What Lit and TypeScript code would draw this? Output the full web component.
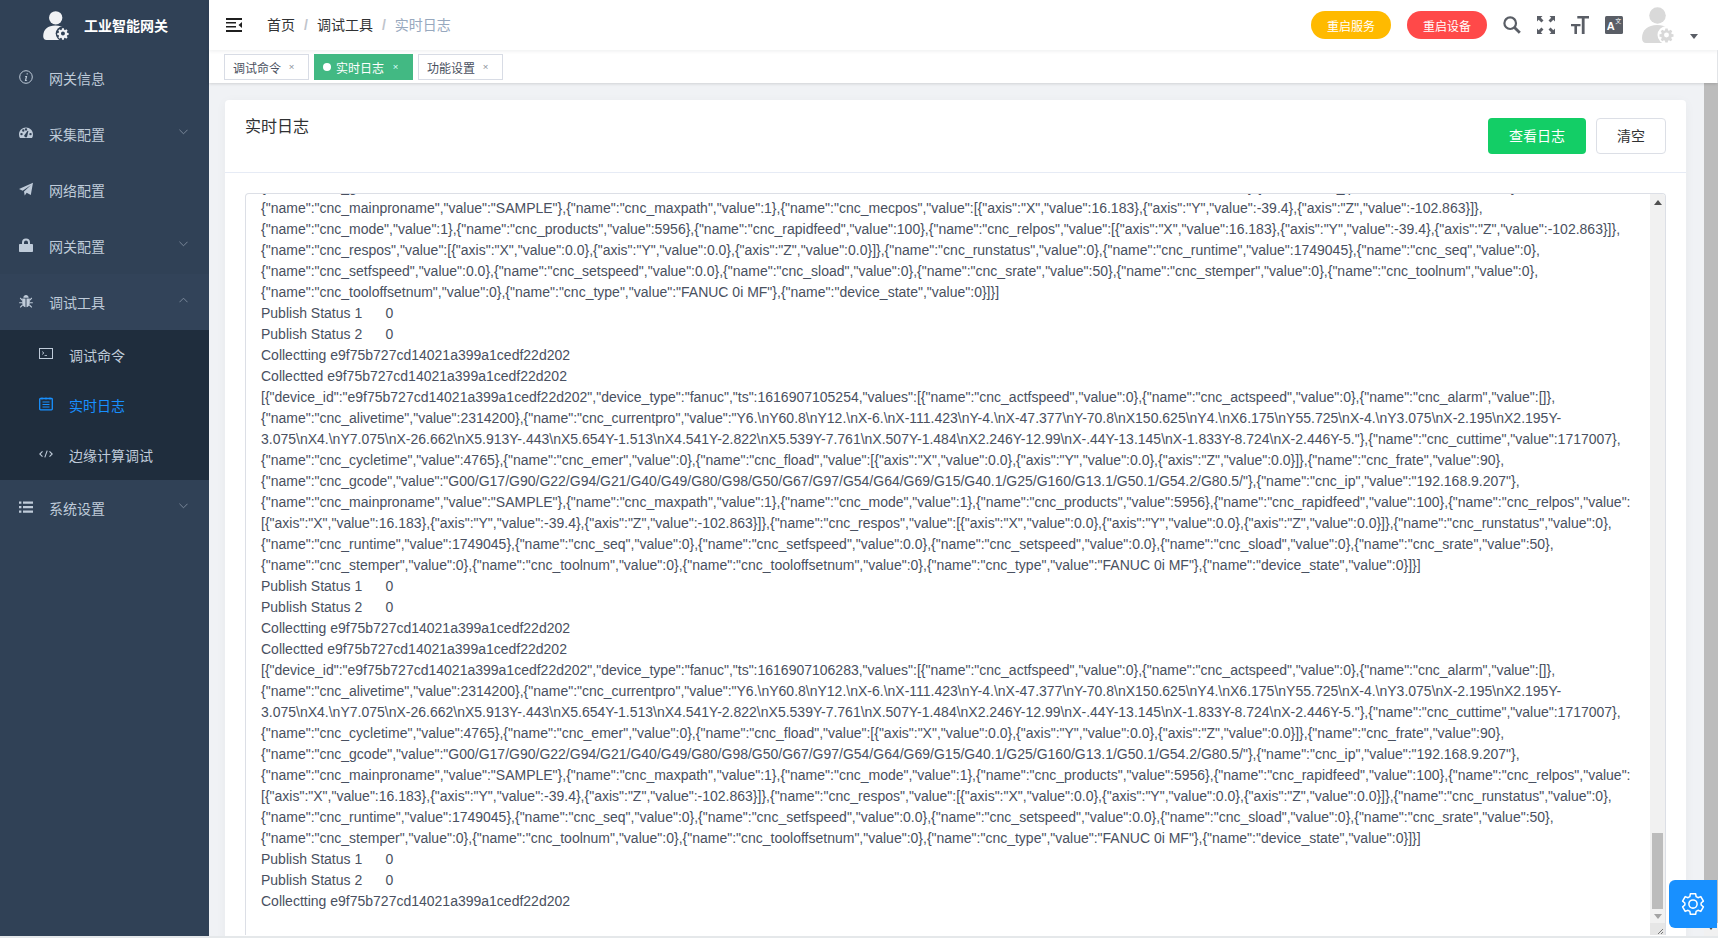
import { LitElement, html, css, svg } from "lit";
import { customElement } from "lit/decorators.js";

const ID = "e9f75b727cd14021a399a1cedf22d202";
const GCODE = `{"name":"cnc_gcode","value":"G00/G17/G90/G22/G94/G21/G40/G49/G80/G98/G50/G67/G97/G54/G64/G69/G15/G40.1/G25/G160/G13.1/G50.1/G54.2/G80.5/"},{"name":"cnc_ip","value":"192.168.9.207"},`;
const block = (ts: string) => [
  `Publish Status 1\t0`,
  `Publish Status 2\t0`,
  `Collectting ${ID}`,
  `Collectted ${ID}`,
  `[{"device_id":"${ID}","device_type":"fanuc","ts":${ts},"values":[{"name":"cnc_actfspeed","value":0},{"name":"cnc_actspeed","value":0},{"name":"cnc_alarm","value":[]},`,
  `{"name":"cnc_alivetime","value":2314200},{"name":"cnc_currentpro","value":"Y6.\\nY60.8\\nY12.\\nX-6.\\nX-111.423\\nY-4.\\nX-47.377\\nY-70.8\\nX150.625\\nY4.\\nX6.175\\nY55.725\\nX-4.\\nY3.075\\nX-2.195\\nX2.195Y-`,
  `3.075\\nX4.\\nY7.075\\nX-26.662\\nX5.913Y-.443\\nX5.654Y-1.513\\nX4.541Y-2.822\\nX5.539Y-7.761\\nX.507Y-1.484\\nX2.246Y-12.99\\nX-.44Y-13.145\\nX-1.833Y-8.724\\nX-2.446Y-5."},{"name":"cnc_cuttime","value":1717007},`,
  `{"name":"cnc_cycletime","value":4765},{"name":"cnc_emer","value":0},{"name":"cnc_fload","value":[{"axis":"X","value":0.0},{"axis":"Y","value":0.0},{"axis":"Z","value":0.0}]},{"name":"cnc_frate","value":90},`,
  GCODE,
  `{"name":"cnc_mainproname","value":"SAMPLE"},{"name":"cnc_maxpath","value":1},{"name":"cnc_mode","value":1},{"name":"cnc_products","value":5956},{"name":"cnc_rapidfeed","value":100},{"name":"cnc_relpos","value":`,
  `[{"axis":"X","value":16.183},{"axis":"Y","value":-39.4},{"axis":"Z","value":-102.863}]},{"name":"cnc_respos","value":[{"axis":"X","value":0.0},{"axis":"Y","value":0.0},{"axis":"Z","value":0.0}]},{"name":"cnc_runstatus","value":0},`,
  `{"name":"cnc_runtime","value":1749045},{"name":"cnc_seq","value":0},{"name":"cnc_setfspeed","value":0.0},{"name":"cnc_setspeed","value":0.0},{"name":"cnc_sload","value":0},{"name":"cnc_srate","value":50},`,
  `{"name":"cnc_stemper","value":0},{"name":"cnc_toolnum","value":0},{"name":"cnc_tooloffsetnum","value":0},{"name":"cnc_type","value":"FANUC 0i MF"},{"name":"device_state","value":0}]}]`,
];
const LINES = [
  GCODE,
  `{"name":"cnc_mainproname","value":"SAMPLE"},{"name":"cnc_maxpath","value":1},{"name":"cnc_mecpos","value":[{"axis":"X","value":16.183},{"axis":"Y","value":-39.4},{"axis":"Z","value":-102.863}]},`,
  `{"name":"cnc_mode","value":1},{"name":"cnc_products","value":5956},{"name":"cnc_rapidfeed","value":100},{"name":"cnc_relpos","value":[{"axis":"X","value":16.183},{"axis":"Y","value":-39.4},{"axis":"Z","value":-102.863}]},`,
  `{"name":"cnc_respos","value":[{"axis":"X","value":0.0},{"axis":"Y","value":0.0},{"axis":"Z","value":0.0}]},{"name":"cnc_runstatus","value":0},{"name":"cnc_runtime","value":1749045},{"name":"cnc_seq","value":0},`,
  `{"name":"cnc_setfspeed","value":0.0},{"name":"cnc_setspeed","value":0.0},{"name":"cnc_sload","value":0},{"name":"cnc_srate","value":50},{"name":"cnc_stemper","value":0},{"name":"cnc_toolnum","value":0},`,
  `{"name":"cnc_tooloffsetnum","value":0},{"name":"cnc_type","value":"FANUC 0i MF"},{"name":"device_state","value":0}]}]`,
  ...block("1616907105254"),
  ...block("1616907106283"),
  `Publish Status 1\t0`,
  `Publish Status 2\t0`,
  `Collectting ${ID}`,
];

const gearPath = "M12 8.2a3.8 3.8 0 1 0 0 7.6 3.8 3.8 0 0 0 0-7.6zM10.2 2h3.6l.6 2.9 1.5.6 2.5-1.6 2.5 2.5-1.6 2.5.6 1.5 2.9.6v3.6l-2.9.6-.6 1.5 1.6 2.5-2.5 2.5-2.5-1.6-1.5.6-.6 2.9h-3.6l-.6-2.9-1.5-.6-2.5 1.6-2.5-2.5 1.6-2.5-.6-1.5-2.9-.6v-3.6l2.9-.6.6-1.5-1.6-2.5 2.5-2.5 2.5 1.6 1.5-.6z";

const userGear = (body: string, gearFill: string, halo: string) => html`<svg viewBox="0 0 33 36" width="100%" height="100%">
  <circle cx="15.500" cy="8.500" r="8.300" fill="${body}"></circle>
  <path d="M0 31c0-8 6-13 15-13 5 0 9 1.500 12 4v14H4c-2.500 0-4-1.500-4-5z" fill="${body}"></path>
  <circle cx="24.500" cy="28" r="9" fill="${halo}"></circle>
  <g transform="translate(16.700 20.200) scale(.65)"><path d="${gearPath}" fill="${gearFill}" fill-rule="evenodd"></path></g>
</svg>`;

const ICONS: Record<string, unknown> = {
  info: svg`<circle cx="7" cy="7" r="6.300" fill="none" stroke="currentColor" stroke-width="1"></circle><path d="M7.600 3.200h1.200v1.200H7.600zM6 6h2.200l-1 4.200h.9v.7H5.800l1-4.200H6z" fill="currentColor"></path>`,
  gauge: svg`<path fill-rule="evenodd" d="M7 1.500C3.100 1.500 0 4.600 0 8.500c0 1.300.4 2.600 1 3.600h12c.6-1 1-2.300 1-3.600 0-3.900-3.100-7-7-7zM2.500 9.300a1.200 1.200 0 1 1 0-2.400 1.200 1.200 0 0 1 0 2.400zM4.300 5.700a1.200 1.200 0 1 1 0-2.400 1.200 1.200 0 0 1 0 2.400zM7 4.600a1.200 1.200 0 1 1 0-2.400 1.200 1.200 0 0 1 0 2.400zM8.200 10.300a1.500 1.500 0 1 1-2.300-1.700l2.700-3.900.8.400zM11.500 9.300a1.200 1.200 0 1 1 0-2.400 1.200 1.200 0 0 1 0 2.400z" fill="currentColor"></path>`,
  plane: svg`<path d="M14 .8 11.800 13 7.700 10.800 5.700 13.400 5 9.500 12 3 3.700 8.700 0 7.100z" fill="currentColor"></path>`,
  lock: svg`<path fill-rule="evenodd" d="M3 6V4.500a4 4 0 0 1 8 0V6h2.200c.5 0 .8.300.8.800v6.400c0 .5-.3.800-.8.800H.8c-.5 0-.8-.3-.8-.8V6.800C0 6.300.3 6 .8 6zm2 0h4V4.500a2 2 0 0 0-4 0z" fill="currentColor"></path>`,
  bug: svg`<path d="M4.300 3.700C4.500 2 5.600 1 7 1s2.500 1 2.700 2.700zM3.200 4.600h3.300V13.200C4.500 13 3.200 11.200 3.200 9zM7.500 4.600h3.300V9c0 2.200-1.300 4-3.300 4.200z" fill="currentColor"></path><path d="M3.400 6.300 1.200 4M3.200 8.700H.2M3.600 11 1.200 13.400M10.600 6.300 12.800 4M10.800 8.700h3M10.400 11l2.400 2.400" fill="none" stroke="currentColor" stroke-width="1.100"></path>`,
  list: svg`<path d="M0 1.500h2.400v2.200H0zM4 1.500h10v2.200H4zM0 6h2.400v2.200H0zM4 6h10v2.200H4zM0 10.500h2.400v2.200H0zM4 10.500h10v2.200H4z" fill="currentColor"></path>`,
  term: svg`<rect x=".5" y="1.500" width="13" height="10" fill="none" stroke="currentColor" stroke-width="1"></rect><path d="M3 4.500 5 6 3 7.500M5.500 8.500h2.500" fill="none" stroke="currentColor" stroke-width=".8"></path>`,
  log: svg`<path d="M3 .5v2M7 .5v2M11 .5v2" stroke="currentColor" stroke-width="1" fill="none"></path><rect x=".7" y="1.500" width="12.600" height="11.300" rx=".8" fill="none" stroke="currentColor" stroke-width="1.300"></rect><path d="M3.500 5h7M3.500 7.500h7M3.500 10h7" stroke="currentColor" stroke-width="1" fill="none"></path>`,
  code: svg`<path d="M3.500 4.300.8 7l2.700 2.700M10.500 4.300 13.200 7l-2.700 2.700M8.200 3.600 5.800 10.400" fill="none" stroke="currentColor" stroke-width="1.100"></path>`,
};
const icon = (n: string) => html`<svg class="mi" viewBox="0 0 14 14" width="14" height="14">${ICONS[n]}</svg>`;
const chevron = (up = false) => html`<svg class="chev" viewBox="0 0 10 6" width="9" height="6"><path d="${up ? "M.5 5.500 5 1l4.500 4.500" : "M.5.500 5 5 9.500.500"}" fill="none" stroke="currentColor" stroke-width=".9"></path></svg>`;

@customElement("app-root")
export class AppRoot extends LitElement {
  static styles = css`
    :host { display: block; width: 1718px; height: 938px; overflow: hidden; position: relative; background: #f0f2f5;
      font-family: "Liberation Sans", "Noto Sans CJK SC", sans-serif; color: #303133; }
    .app { display: flex; height: 938px; }
    .side { width: 209px; flex: none; background: #304156; color: #bfcbd9; font-size: 14px; }
    .logo { height: 50px; display: flex; align-items: center; padding-left: 43px; box-sizing: border-box; color: #fff; font-weight: 700; }
    .logo .lg { width: 27px; height: 29px; margin-right: 14px; }
    .logo span { margin-top: -1px; }
    .item { height: 56px; display: flex; align-items: center; padding-left: 19px; box-sizing: border-box; }
    .item .mi { margin-right: 16px; flex: none; margin-top: -2px; }
    .item .chev { margin-left: auto; margin-right: 21px; margin-top: -5px; color: #8a97a8; }
    .item.open { background: #324359; }
    .sub { background: #1f2d3d; }
    .sub .item { height: 50px; padding-left: 39px; }
    .sub .item.on { color: #1890ff; }
    .main { flex: 1; display: flex; flex-direction: column; min-width: 0; }
    .top { height: 50px; flex: none; background: #fff; display: flex; align-items: center; box-shadow: 0 1px 4px rgba(0,21,41,.08); position: relative; z-index: 2; font-size: 14px; }
    .ham { margin-left: 17px; width: 16px; height: 14px; flex: none; }
    .crumb { margin-left: 25px; margin-top: -2px; display: flex; align-items: baseline; color: #303133; white-space: nowrap; }
    .crumb i { font-style: normal; font-weight: 700; color: #c0c4cc; margin: 0 9px; }
    .crumb .last { color: #97a8be; }
    .right { margin-left: auto; display: flex; align-items: center; height: 50px; }
    .pill { width: 80px; height: 28px; border-radius: 14px; color: #fff; font-size: 12px; display: flex; align-items: center; justify-content: center; margin-right: 16px; }
    .pill.y { background: #ffba00; }
    .pill.r { background: #ff4949; }
    .ti { width: 18px; height: 18px; margin-right: 16px; flex: none; color: #5a5e66; margin-top: -1px; }
    .ava { width: 33px; height: 36px; margin-left: 3px; }
    .caret { width: 0; height: 0; border: 4px solid transparent; border-top: 5px solid #5a5e66; border-bottom: 0; margin: 22px 20px 0 15px; }
    .tags { height: 33px; flex: none; background: #fff; box-sizing: border-box; padding: 4px 0 0 15px; display: flex; gap: 5px; box-shadow: 0 1px 3px 0 rgba(0,0,0,.12), 0 0 3px 0 rgba(0,0,0,.04); position: relative; z-index: 1; margin-right: 1px; }
    .tag { height: 26px; box-sizing: border-box; border: 1px solid #d8dce5; background: #fff; color: #495060; font-size: 12px; display: flex; align-items: center; padding-left: 8px; }
    .tag em { font-style: normal; font-size: 12px; color: #8b8f98; margin-left: 7px; transform: scale(.8); }
    .tag.on { background: #42b983; border-color: #42b983; color: #fff; padding-left: 8px; }
    .tag.on em { color: #dff; margin-left: 8px; }
    .tag .dot { width: 8px; height: 8px; border-radius: 50%; background: #fff; margin-right: 5px; }
    .wrap { flex: 1; display: flex; min-height: 0; position: relative; }
    .content { flex: 1; padding: 17px 18px 0 16px; min-width: 0; }
    .pagebar { width: 14px; flex: none; background: #f1f1f1; display: flex; flex-direction: column; align-items: center; }
    .pagethumb { flex: 1; width: 14px; background: #bcbcbc; }
    .pagedown { width: 0; height: 0; border: 3px solid transparent; border-top: 4px solid #505050; border-bottom: 0; margin: 3px 0 8px; }
    .card { background: #fff; border-radius: 4px 4px 0 0; box-shadow: 0 2px 12px 0 rgba(0,0,0,.04); height: 853px; overflow: hidden; }
    .chead { height: 73px; box-sizing: border-box; border-bottom: 1px solid #e6ebf5; display: flex; padding: 18px 20px 0; }
    .chead h2 { margin: 0; font-weight: 400; font-size: 16px; line-height: 18px; color: #303133; }
    .btns { margin-left: auto; display: flex; gap: 10px; }
    .btn { height: 36px; box-sizing: border-box; border-radius: 4px; font-size: 14px; display: flex; align-items: center; justify-content: center; padding-bottom: 2px; }
    .btn.g { width: 98px; background: #13ce66; color: #fff; }
    .btn.w { width: 70px; border: 1px solid #dcdfe6; color: #303133; }
    .cbody { padding: 20px 20px 0; }
    .ta { height: 742px; box-sizing: border-box; border: 1px solid #dcdfe6; border-bottom: 0; border-radius: 4px 4px 0 0; display: flex; overflow: hidden; background: #fff; }
    .log { flex: 1; min-width: 0; overflow: hidden; padding-left: 15px; font-size: 14px; line-height: 21px; color: #495060; }
    .log > div { height: 21px; white-space: pre; tab-size: 8; }
    .log > div:first-child { margin-top: -17px; }
    .sb { width: 15px; flex: none; background: #f1f1f1; display: flex; flex-direction: column; align-items: center; }
    .up { width: 0; height: 0; border: 4px solid transparent; border-bottom: 5px solid #505050; border-top: 0; margin-top: 6px; }
    .gap1 { height: 628px; flex: none; }
    .thumb { width: 11px; height: 76px; background: #bcbcbc; flex: none; }
    .down { width: 0; height: 0; border: 4px solid transparent; border-top: 5px solid #a3a3a3; border-bottom: 0; margin-top: 5px; }
    .grip { margin-top: auto; width: 15px; height: 12px; background: #e6e6e6; display: block; }
    .gear { position: absolute; right: 1px; top: 880px; width: 48px; height: 48px; background: #1890ff; border-radius: 6px 0 0 6px; display: flex; align-items: center; justify-content: center; z-index: 5; }
    .foot { position: absolute; left: 0; right: 0; bottom: 0; height: 2px; background: #e5e8ea; z-index: 4; }
  `;

  render() {
    return html`<div class="app">
      <aside class="side">
        <div class="logo"><div class="lg">${userGear("#f0f2f5", "#f0f2f5", "#304156")}</div><span>工业智能网关</span></div>
        <div class="item">${icon("info")}网关信息</div>
        <div class="item">${icon("gauge")}采集配置${chevron()}</div>
        <div class="item">${icon("plane")}网络配置</div>
        <div class="item">${icon("lock")}网关配置${chevron()}</div>
        <div class="item open">${icon("bug")}调试工具${chevron(true)}</div>
        <div class="sub">
          <div class="item">${icon("term")}调试命令</div>
          <div class="item on">${icon("log")}实时日志</div>
          <div class="item">${icon("code")}边缘计算调试</div>
        </div>
        <div class="item">${icon("list")}系统设置${chevron()}</div>
      </aside>
      <div class="main">
        <header class="top">
          <svg class="ham" viewBox="0 0 16 14"><path d="M0 0h16v2H0zM0 12h16v2H0zM0 4h10v1.600H0zM0 8h10v1.600H0zM16 4v6l-3.500-3z" fill="#1f1f1f"></path></svg>
          <div class="crumb"><span>首页</span><i>/</i><span>调试工具</span><i>/</i><span class="last">实时日志</span></div>
          <div class="right">
            <div class="pill y">重启服务</div>
            <div class="pill r">重启设备</div>
            <svg class="ti" viewBox="0 0 18 18"><circle cx="7.200" cy="7.200" r="5.800" fill="none" stroke="currentColor" stroke-width="2.200"></circle><path d="m11.500 11.500 5.300 5.300" stroke="currentColor" stroke-width="2.800" fill="none"></path></svg>
            <svg class="ti" viewBox="0 0 18 18"><path d="M0 0h5.500L3.800 1.700 6.500 4.400 4.400 6.500 1.700 3.800 0 5.500zM18 0v5.500l-1.700-1.700-2.700 2.700-2.100-2.100 2.700-2.700L12.500 0zM0 18v-5.500l1.700 1.700 2.700-2.700 2.100 2.100-2.700 2.700 1.700 1.700zM18 18h-5.500l1.700-1.700-2.700-2.700 2.100-2.100 2.700 2.700 1.700-1.700z" fill="currentColor"></path></svg>
            <svg class="ti" viewBox="0 0 18 18"><path d="M6.300 0H18v2.400h-4.400V18h-2.800V2.400H6.300zM0 8h9.500v2.200H6V18H3.400V10.200H0z" fill="currentColor"></path></svg>
            <svg class="ti" viewBox="0 0 18 18"><rect width="18" height="18" rx="1.500" fill="currentColor"></rect><text x="1.800" y="14" font-size="11" font-weight="700" fill="#fff" font-family="Liberation Sans">A</text><text x="10.200" y="7" font-size="6" fill="#fff" font-family="Noto Sans CJK SC">文</text></svg>
            <div class="ava">${userGear("#d9d9d9", "#d9d9d9", "#fff")}</div>
            <div class="caret"></div>
          </div>
        </header>
        <nav class="tags">
          <div class="tag" style="width:85px">调试命令<em>×</em></div>
          <div class="tag on" style="width:99px"><span class="dot"></span>实时日志<em>×</em></div>
          <div class="tag" style="width:85px">功能设置<em>×</em></div>
        </nav>
        <div class="wrap">
          <div class="content">
            <section class="card">
              <div class="chead"><h2>实时日志</h2><div class="btns"><div class="btn g">查看日志</div><div class="btn w">清空</div></div></div>
              <div class="cbody">
                <div class="ta">
                  <div class="log">${LINES.map((l) => html`<div>${l}</div>`)}</div>
                  <div class="sb">
                    <span class="up"></span><span class="gap1"></span><span class="thumb"></span><span class="down"></span>
                    <svg class="grip" viewBox="0 0 15 12"><path d="M8 11l5-5M11 11l2-2" stroke="#777" stroke-width="1" fill="none"></path></svg>
                  </div>
                </div>
              </div>
            </section>
          </div>
          <div class="pagebar"><div class="pagethumb"></div><span class="pagedown"></span></div>
        </div>
      </div>
      <div class="gear"><svg viewBox="0 0 24 24" width="26" height="26"><path d="M9.600 2.500h4.800l.5 2.700 1.700 1 2.600-1 2.400 4.200-2.100 1.700v1.800l2.100 1.700-2.400 4.200-2.600-1-1.700 1-.5 2.700H9.600l-.5-2.700-1.700-1-2.600 1L2.400 14.600l2.100-1.700v-1.800L2.400 9.400l2.400-4.200 2.600 1 1.700-1z" fill="none" stroke="#fff" stroke-width="1.400" stroke-linejoin="round"></path><circle cx="12" cy="12" r="3.800" fill="none" stroke="#fff" stroke-width="1.400"></circle></svg></div>
      <div class="foot"></div>
    </div>`;
  }
}
